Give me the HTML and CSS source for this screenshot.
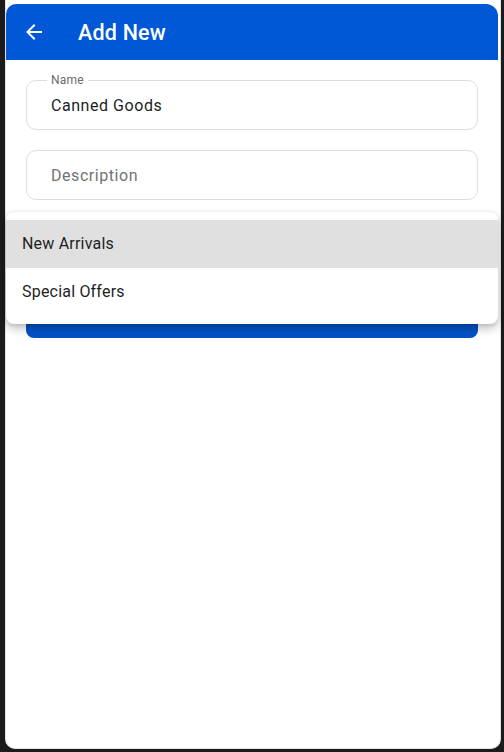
FILE: index.html
```html
<!DOCTYPE html>
<html>
<head>
<meta charset="utf-8">
<link rel="stylesheet" href="styles.css">
</head>
<body>
<div class="frame">
  <header class="appbar">
    <svg class="back" viewBox="0 0 24 24" width="24" height="24"><path fill="#fff" d="M20 11H7.83l5.59-5.59L12 4l-8 8 8 8 1.41-1.41L7.83 13H20v-2z"/></svg>
    <h1 class="title">Add New</h1>
  </header>
  <main class="form">
    <div class="field">
      <span class="label">Name</span>
      <span class="value">Canned Goods</span>
    </div>
    <div class="field">
      <span class="placeholder">Description</span>
    </div>
    <div class="field"></div>
    <div class="submit"></div>
  </main>
  <ul class="menu">
    <li class="item active">New Arrivals</li>
    <li class="item">Special Offers</li>
  </ul>
</div>
</body>
</html>
```
FILE: styles.css
```css
* { box-sizing: border-box; }
html, body { margin: 0; height: 100%; }
body {
  background: #1b1b1b;
  font-family: Roboto, "Noto Sans", "Liberation Sans", sans-serif;
  padding: 0 3px 3px 5px;
}
.frame {
  position: relative;
  background: #fff;
  height: 749px;
  width: 496px;
  border: 1px solid #e2e2e2;
  border-top: none;
  border-radius: 0 0 10px 10px;
  padding: 4px 2px 0 0;
}
.appbar {
  height: 56px;
  background: #0058d6;
  border-radius: 10px 12px 0 0;
  display: flex;
  align-items: center;
  padding-left: 16px;
  gap: 32px;
}
.back { display: block; }
.title {
  margin: 0;
  color: #fff;
  font-size: 21.5px;
  font-weight: 500;
  letter-spacing: 0.2px;
}
.form {
  padding: 20px 20px 0 20px;
  display: flex;
  flex-direction: column;
  gap: 20px;
}
.field {
  position: relative;
  height: 50px;
  border: 1px solid #dedede;
  border-radius: 10px;
  display: flex;
  align-items: center;
  padding: 0 24px;
  font-size: 16px;
}
.label {
  position: absolute;
  top: -8px;
  left: 20px;
  padding: 0 4px;
  background: #fff;
  font-size: 12px;
  color: #6b6b6b;
  line-height: 14px;
  letter-spacing: 0.2px;
}
.value { color: #1e1e1e; letter-spacing: 0.55px; }
.placeholder { color: #737373; letter-spacing: 0.55px; }
.submit {
  height: 48px;
  border-radius: 8px;
  background: #0052c6;
}
.menu {
  position: absolute;
  top: 212px;
  left: 0;
  right: 2px;
  margin: 0;
  padding: 8px 0;
  list-style: none;
  background: #fff;
  border-radius: 8px;
  box-shadow: 0 5px 10px rgba(0,0,0,0.22), 0 1px 4px rgba(0,0,0,0.12);
}
.item {
  height: 48px;
  display: flex;
  align-items: center;
  padding: 0 16px 1px;
  font-size: 16px;
  color: #1f1f1f;
  letter-spacing: 0.2px;
}
.item.active { background: #e0e0e0; }
```
